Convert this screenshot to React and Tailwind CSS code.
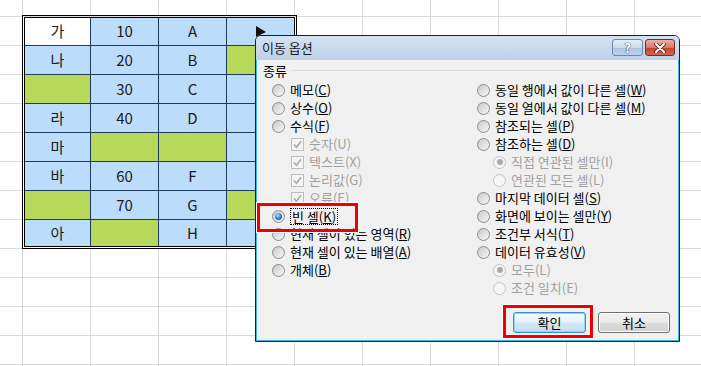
import React from 'react';

// sheet data: [text, fill]  w = white, b = blue, g = green
const rows = [
    [['가', 'w'], ['10', 'b'], ['A', 'b'], ['', 'b']],
    [['나', 'b'], ['20', 'b'], ['B', 'b'], ['', 'g']],
    [['', 'g'], ['30', 'b'], ['C', 'b'], ['', 'b']],
    [['라', 'b'], ['40', 'b'], ['D', 'b'], ['', 'b']],
    [['마', 'b'], ['', 'g'], ['', 'g'], ['', 'b']],
    [['바', 'b'], ['60', 'b'], ['F', 'b'], ['', 'b']],
    [['', 'g'], ['70', 'b'], ['G', 'b'], ['', 'g']],
    [['아', 'b'], ['', 'g'], ['H', 'b'], ['', 'b']],
];

const fills = { w: 'bg-white', b: 'bg-[#bcdcfc]', g: 'bg-[#b8d85a]' };

const leftOptions = [
    { text: '메모', key: 'C' },
    { text: '상수', key: 'O' },
    { text: '수식', key: 'F' },
    { text: '숫자', key: 'U', sub: true, box: true, disabled: true },
    { text: '텍스트', key: 'X', sub: true, box: true, disabled: true },
    { text: '논리값', key: 'G', sub: true, box: true, disabled: true },
    { text: '오류', key: 'E', sub: true, box: true, disabled: true },
    { text: '빈 셀', key: 'K', checked: true, focus: true },
    { text: '현재 셀이 있는 영역', key: 'R' },
    { text: '현재 셀이 있는 배열', key: 'A' },
    { text: '개체', key: 'B' },
];

const rightOptions = [
    { text: '동일 행에서 값이 다른 셀', key: 'W' },
    { text: '동일 열에서 값이 다른 셀', key: 'M' },
    { text: '참조되는 셀', key: 'P' },
    { text: '참조하는 셀', key: 'D' },
    { text: '직접 연관된 셀만', key: 'I', sub: true, disabled: true, checked: true },
    { text: '연관된 모든 셀', key: 'L', sub: true, disabled: true },
    { text: '마지막 데이터 셀', key: 'S' },
    { text: '화면에 보이는 셀만', key: 'Y' },
    { text: '조건부 서식', key: 'T' },
    { text: '데이터 유효성', key: 'V' },
    { text: '모두', key: 'L', sub: true, disabled: true, checked: true },
    { text: '조건 일치', key: 'E', sub: true, disabled: true },
];

const Radio = ({ checked, disabled }) => (
    <span
        className={
            disabled
                ? 'flex h-[13px] w-[13px] shrink-0 items-center justify-center rounded-full border border-[#c4c4c4] bg-[#f6f6f6]'
                : 'flex h-[13px] w-[13px] shrink-0 items-center justify-center rounded-full border border-[#8c8c8c] bg-[linear-gradient(135deg,#c9c9c9,#f7f7f7)]'
        }
    >
        {checked && (
            <span
                className={
                    disabled
                        ? 'h-[6px] w-[6px] rounded-full bg-[#a9a9a9]'
                        : 'h-[7px] w-[7px] rounded-full bg-[radial-gradient(circle_at_40%_35%,#a8dcff,#1f74c4_60%,#0c3d78)]'
                }
            />
        )}
    </span>
);

const CheckBox = () => (
    <span className="flex h-[13px] w-[13px] shrink-0 items-center justify-center border border-[#bdbdbd] bg-[#f5f5f5]">
        <svg width="9" height="9" viewBox="0 0 9 9">
            <path d="M1 4.5 L3.5 7.2 L8 1.2" stroke="#a9a9a9" strokeWidth="1.6" fill="none" />
        </svg>
    </span>
);

const Label = ({ opt }) => (
    <span
        className={
            opt.focus
                ? 'border border-dotted border-black px-px leading-[15px] whitespace-nowrap'
                : opt.disabled
                    ? 'text-[#a0a0a0] whitespace-nowrap'
                    : 'whitespace-nowrap'
        }
    >
        {opt.text}(
        {opt.disabled ? opt.key : <span className="underline underline-offset-[1px]">{opt.key}</span>}
        )
    </span>
);

const OptionRow = ({ opt, indent }) => (
    <div className={opt.sub ? `flex h-[18px] items-center gap-[5px] ${indent}` : 'flex h-[18px] items-center gap-[5px]'}>
        {opt.box ? <CheckBox /> : <Radio checked={opt.checked} disabled={opt.disabled} />}
        <Label opt={opt} />
    </div>
);

const DialogButton = ({ children, primary }) => (
    <button
        className={
            primary
                ? 'h-[21px] w-[73px] rounded-[3px] border border-[#3c8fcf] bg-[linear-gradient(to_bottom,#f3f9fd_0%,#e6f2fa_48%,#d4e8f6_52%,#c2def2_100%)] text-[13px] leading-none text-black shadow-[inset_0_0_0_1px_#8fd4f5]'
                : 'h-[21px] w-[72px] rounded-[3px] border border-[#707070] bg-[linear-gradient(to_bottom,#f2f2f2_0%,#ebebeb_48%,#dddddd_52%,#cfcfcf_100%)] text-[13px] leading-none text-black shadow-[inset_0_0_0_1px_#fcfcfc]'
        }
    >
        {children}
    </button>
);

export default function App() {
    return (
        <div className="relative h-[366px] w-[701px] overflow-hidden bg-white font-['Noto_Sans_CJK_KR','Noto_Sans',sans-serif] [background-image:linear-gradient(to_right,#d9d9d9_1px,transparent_1px),linear-gradient(to_bottom,#d9d9d9_1px,transparent_1px)] [background-size:68px_29px] [background-position:22px_16px]">
            {/* worksheet range */}
            <div className="pl-[22px] pt-[15px]">
                <div className="w-fit border-[3px] border-double border-black">
                    <div className="grid grid-cols-[65px_68px_68px_68px] grid-rows-[27px_repeat(6,29px)_27px] text-[15px] text-[#1a1a1a]">
                        {rows.map((row, r) =>
                            row.map(([text, fill], c) => (
                                <div
                                    key={`${r}-${c}`}
                                    className={`flex items-center justify-center border-[#1f3a5f] ${fills[fill]} ${c > 0 ? 'border-l' : ''} ${r > 0 ? 'border-t' : ''}`}
                                >
                                    {text}
                                </div>
                            ))
                        )}
                    </div>
                </div>
            </div>

            {/* mouse pointer */}
            <svg className="absolute left-[255px] top-[26px]" width="12" height="12" viewBox="0 0 12 12">
                <polygon points="1,0 11,6 1,11" fill="#111" />
            </svg>

            {/* Go To Special dialog */}
            <div className="absolute left-[255px] top-[35px] flex h-[307px] w-[425px] flex-col overflow-hidden rounded-t-[6px] border border-[#1e1e1e] bg-[#f0f0f0]">
                <div className="flex h-[24px] shrink-0 items-start justify-between bg-[linear-gradient(to_bottom,#d3e2f2,#bcd1e9)] pl-[6px] pr-[4px]">
                    <span className="pt-[3px] text-[13px] leading-[17px] text-[#1b1b1b]">이동 옵션</span>
                    <div className="flex gap-[2px] pt-[3px]">
                        <div className="flex h-[17px] w-[31px] items-center justify-center rounded-[3px] border border-[#6b88ad] bg-[linear-gradient(to_bottom,#e4eef8_0%,#c9dbef_50%,#a9c3e2_51%,#bcd2ec_100%)] text-[13px] font-bold leading-none text-white [text-shadow:0_0_1px_#1f2f45,0_0_1px_#1f2f45]">
                            ?
                        </div>
                        <div className="flex h-[17px] w-[30px] items-center justify-center rounded-[3px] border border-[#7b2a1f] bg-[linear-gradient(to_bottom,#eab1a4_0%,#d9796a_50%,#c2402a_51%,#d36a50_100%)]">
                            <svg width="12" height="10" viewBox="0 0 12 10">
                                <path d="M2 1 L10 9 M10 1 L2 9" stroke="#4a1a12" strokeWidth="3.4" strokeLinecap="round" />
                                <path d="M2 1 L10 9 M10 1 L2 9" stroke="#ffffff" strokeWidth="2" strokeLinecap="round" />
                            </svg>
                        </div>
                    </div>
                </div>

                <div className="flex flex-1 flex-col border-x border-b border-[#3db7e6] text-[13px] text-black">
                    <div className="flex h-[21px] shrink-0 items-center pl-[6px] pr-[5px]">
                        <span>종류</span>
                        <div className="ml-[4px] h-px flex-1 bg-[#d5dee6]" />
                    </div>

                    <div className="flex pl-[15px]">
                        <div className="w-[205px]">
                            {leftOptions.map((opt, i) => (
                                <OptionRow key={i} opt={opt} indent="pl-[19px]" />
                            ))}
                        </div>
                        <div>
                            {rightOptions.map((opt, i) => (
                                <OptionRow key={i} opt={opt} indent="pl-[16px]" />
                            ))}
                        </div>
                    </div>

                    <div className="mt-auto flex justify-end gap-[12px] pb-[7px] pr-[8px]">
                        <DialogButton primary>확인</DialogButton>
                        <DialogButton>취소</DialogButton>
                    </div>
                </div>
            </div>

            {/* red highlight boxes */}
            <div className="absolute left-[257px] top-[203px] h-[29px] w-[101px] border-[3px] border-[#ee0000] shadow-[0_0_0_1px_#ffffff]" />
            <div className="absolute left-[503px] top-[305px] h-[33px] w-[90px] border-[3px] border-[#ee0000] shadow-[0_0_0_1px_#ffffff]" />
        </div>
    );
}
